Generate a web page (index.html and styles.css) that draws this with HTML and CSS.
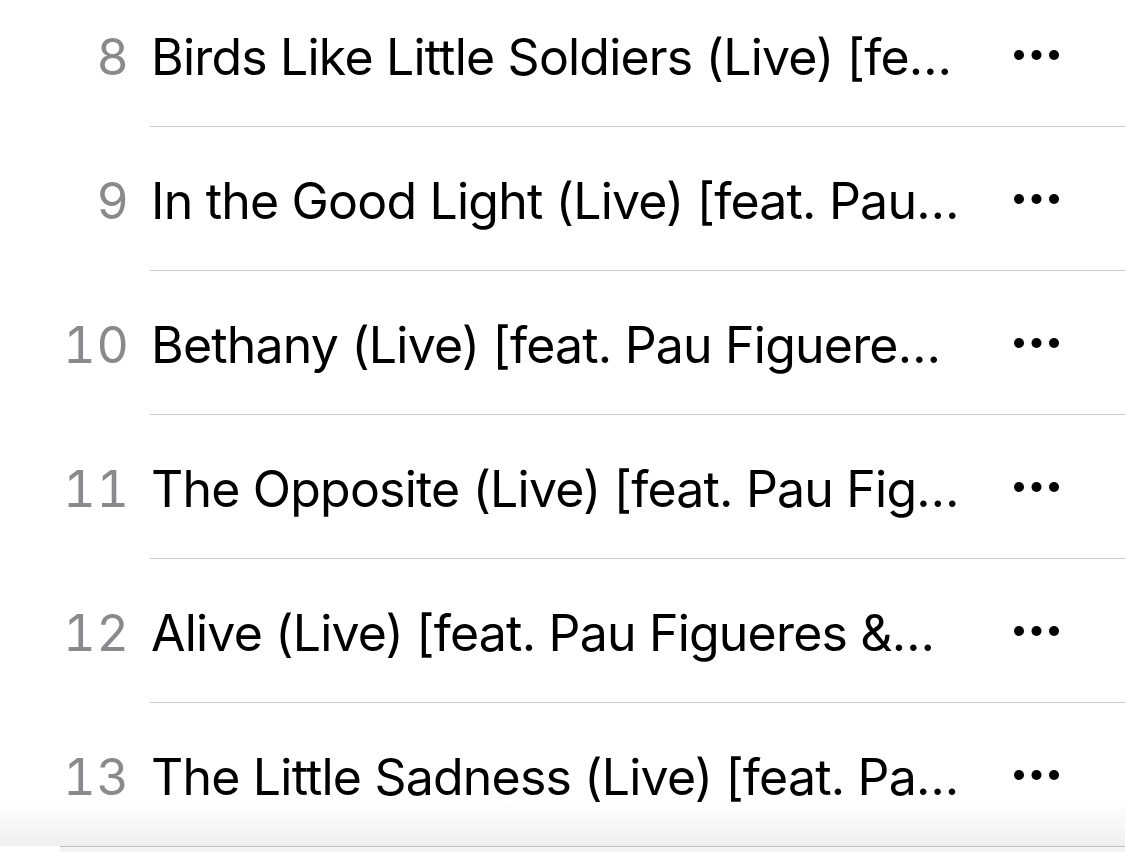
FILE: index.html
```html
<!DOCTYPE html>
<html lang="en">
<head>
  <meta charset="UTF-8">
  <meta name="viewport" content="width=device-width, initial-scale=1.0">
  <title>Tracks</title>
  <link rel="stylesheet" href="styles.css">
</head>
<body>

  <div class="track-list">
    <div class="track">
      <span class="num">8</span>
      <div class="main">
        <span class="title">Birds Like Little Soldiers (Live) [fe…</span>
        <span class="more"><svg width="46" height="12" viewBox="0 0 46 12"><circle cx="5" cy="6" r="5"/><circle cx="22.5" cy="6" r="5"/><circle cx="40" cy="6" r="5"/></svg></span>
      </div>
    </div>
    <div class="track">
      <span class="num">9</span>
      <div class="main">
        <span class="title">In the Good Light (Live) [feat. Pau…</span>
        <span class="more"><svg width="46" height="12" viewBox="0 0 46 12"><circle cx="5" cy="6" r="5"/><circle cx="22.5" cy="6" r="5"/><circle cx="40" cy="6" r="5"/></svg></span>
      </div>
    </div>
    <div class="track">
      <span class="num">10</span>
      <div class="main">
        <span class="title">Bethany (Live) [feat. Pau Figuere…</span>
        <span class="more"><svg width="46" height="12" viewBox="0 0 46 12"><circle cx="5" cy="6" r="5"/><circle cx="22.5" cy="6" r="5"/><circle cx="40" cy="6" r="5"/></svg></span>
      </div>
    </div>
    <div class="track">
      <span class="num">11</span>
      <div class="main">
        <span class="title">The Opposite (Live) [feat. Pau Fig…</span>
        <span class="more"><svg width="46" height="12" viewBox="0 0 46 12"><circle cx="5" cy="6" r="5"/><circle cx="22.5" cy="6" r="5"/><circle cx="40" cy="6" r="5"/></svg></span>
      </div>
    </div>
    <div class="track">
      <span class="num">12</span>
      <div class="main">
        <span class="title">Alive (Live) [feat. Pau Figueres &amp;…</span>
        <span class="more"><svg width="46" height="12" viewBox="0 0 46 12"><circle cx="5" cy="6" r="5"/><circle cx="22.5" cy="6" r="5"/><circle cx="40" cy="6" r="5"/></svg></span>
      </div>
    </div>
    <div class="track">
      <span class="num">13</span>
      <div class="main">
        <span class="title">The Little Sadness (Live) [feat. Pa…</span>
        <span class="more"><svg width="46" height="12" viewBox="0 0 46 12"><circle cx="5" cy="6" r="5"/><circle cx="22.5" cy="6" r="5"/><circle cx="40" cy="6" r="5"/></svg></span>
      </div>
    </div>
  </div>

  <!-- mini player peeking in at the bottom -->
  <div class="player-shade"></div>
  <div class="player"></div>

</body>
</html>
```

FILE: styles.css
```css
* {
  margin: 0;
  padding: 0;
  box-sizing: border-box;
}

body {
  font-family: Inter, 'Noto Sans', sans-serif;
  background-color: #ffffff;
  color: #000000;
  overflow: hidden;
  height: 852px;
}

.track-list {
  margin-top: -17px;
}

.track {
  display: flex;
  height: 144px;
}

.num {
  width: 130px;
  text-align: right;
  font-size: 50px;
  color: #8a8a8e;
  align-self: center;
  padding-top: 4px;
  letter-spacing: 1px;
  font-variant-numeric: tabular-nums;
  margin-right: -6px;
}

.main {
  flex: 1;
  margin-left: 26px;
  display: flex;
  align-items: center;
  border-bottom: 1px solid #c8c8cb;
}

.title {
  flex: 1;
  padding-top: 5px;
  padding-left: 1px;
  font-size: 50px;
  letter-spacing: -0.8px;
  white-space: nowrap;
  overflow: hidden;
}

.more {
  width: 111px;
  display: flex;
  align-items: center;
}

.more svg {
  fill: #000000;
}

.player-shade {
  position: fixed;
  left: 0;
  right: 0;
  top: 800px;
  height: 46px;
  background: linear-gradient(to bottom, rgba(240, 240, 240, 0), rgba(238, 238, 238, 0.9));
}

.player {
  position: fixed;
  left: 60px;
  right: 0;
  top: 846px;
  height: 6px;
  border-top: 1px solid #bdbdbd;
  background: #f3f3f3;
}
```
